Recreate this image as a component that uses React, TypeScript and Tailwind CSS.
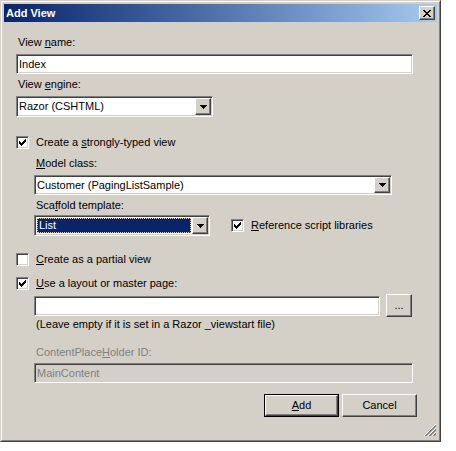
import type { ReactNode } from "react";

// classic 3D edges
const sunken =
  "border border-t-[#808080] border-l-[#808080] border-r-white border-b-white shadow-[inset_1px_1px_0_#404040,inset_-1px_-1px_0_#d4d0c8]";
const raised =
  "border border-t-white border-l-white border-r-[#404040] border-b-[#404040] shadow-[inset_-1px_-1px_0_#808080]";

const Arrow = () => (
  <svg width="7" height="4" viewBox="0 0 7 4" shapeRendering="crispEdges">
    <path d="M0 0h7v1H0zM1 1h5v1H1zM2 2h3v1H2zM3 3h1v1H3z" fill="#000" />
  </svg>
);

const Check = () => (
  <svg width="7" height="7" viewBox="0 0 7 7" shapeRendering="crispEdges" className="m-[1px]">
    <path
      d="M0 2h1v3H0zM1 3h1v3H1zM2 4h1v3H2zM3 3h1v3H3zM4 2h1v3H4zM5 1h1v3H5zM6 0h1v3H6z"
      fill="#000"
    />
  </svg>
);

const CheckBox = ({ checked, children }: { checked?: boolean; children: ReactNode }) => (
  <div className="flex items-center h-[13px]">
    <span className={`${sunken} bg-white w-[13px] h-[13px] p-[1px] flex shrink-0`}>
      {checked && <Check />}
    </span>
    <span className="ml-[7px] leading-[13px]">{children}</span>
  </div>
);

const Combo = ({
  className,
  selected,
  children,
}: {
  className: string;
  selected?: boolean;
  children: ReactNode;
}) => (
  <div className={`${sunken} bg-white flex p-[1px] ${className}`}>
    {selected ? (
      <div className="flex-1 m-[1px] bg-[#0a246a] text-white border border-dotted border-[#e8d48c] flex items-center pl-[1px]">
        {children}
      </div>
    ) : (
      <div className="flex-1 flex items-center pl-[1px]">{children}</div>
    )}
    <div className={`${raised} bg-[#d4d0c8] w-[16px] flex items-center justify-center`}>
      <Arrow />
    </div>
  </div>
);

const Grip = () => (
  <svg width="13" height="13" viewBox="0 0 13 13" shapeRendering="crispEdges" className="absolute right-[4px] bottom-[5px]">
    {[1, 5, 9].map((a) => (
      <g key={a}>
        <line x1={a} y1={13} x2={13} y2={a} stroke="#fff" />
        <line x1={a + 1} y1={13} x2={13} y2={a + 1} stroke="#808080" />
        <line x1={a + 2} y1={13} x2={13} y2={a + 2} stroke="#808080" />
      </g>
    ))}
  </svg>
);

export default function App() {
  return (
    <div className="w-[456px] h-[451px] bg-white font-['Liberation_Sans',Arial,sans-serif] text-[11px] text-black">
      <div className="relative w-[441px] h-[442px] border border-t-[#d4d0c8] border-l-[#d4d0c8] border-r-[#404040] border-b-[#404040] bg-[#d4d0c8]">
        <div className="h-full border border-t-white border-l-white border-r-[#808080] border-b-[#808080] p-[2px] flex flex-col">
          {/* caption */}
          <div className="h-[18px] shrink-0 flex items-center bg-linear-to-r from-[#0a246a] to-[#a6caf0] pl-[2px]">
            <span className="flex-1 text-white font-bold">Add View</span>
            <div className={`${raised} bg-[#d4d0c8] w-[16px] h-[14px] mr-[2px] flex items-center justify-center`}>
              <svg width="8" height="7" viewBox="0 0 8 7" shapeRendering="crispEdges">
                <path
                  d="M0 0h2v1H0zM6 0h2v1H6zM1 1h2v1H1zM5 1h2v1H5zM2 2h4v1H2zM3 3h2v1H3zM2 4h4v1H2zM1 5h2v1H1zM5 5h2v1H5zM0 6h2v1H0zM6 6h2v1H6z"
                  fill="#000"
                />
              </svg>
            </div>
          </div>

          <div className="flex flex-col pl-[12px] leading-[13px]">
            <div className="mt-[14px] h-[13px] ml-[2px]">
              View <u>n</u>ame:
            </div>
            <div className={`${sunken} mt-[5px] w-[397px] h-[20px] bg-white flex items-center pl-[2px]`}>
              Index
            </div>
            <div className="mt-[4px] h-[13px] ml-[2px]">
              View <u>e</u>ngine:
            </div>
            <Combo className="mt-[5px] w-[197px] h-[21px]">Razor (CSHTML)</Combo>

            <div className="mt-[19px]">
              <CheckBox checked>
                Create a <u>s</u>trongly-typed view
              </CheckBox>
            </div>
            <div className="mt-[8px] h-[13px] ml-[20px]">
              <u>M</u>odel class:
            </div>
            <Combo className="mt-[5px] ml-[18px] w-[358px] h-[20px]">Customer (PagingListSample)</Combo>
            <div className="mt-[4px] h-[13px] ml-[20px]">
              Sca<u>f</u>fold template:
            </div>
            <div className="mt-[3px] ml-[18px] h-[21px] flex items-center">
              <Combo className="w-[176px] h-[21px]" selected>
                List
              </Combo>
              <div className="ml-[21px]">
                <CheckBox checked>
                  <u>R</u>eference script libraries
                </CheckBox>
              </div>
            </div>

            <div className="mt-[17px]">
              <CheckBox>
                <u>C</u>reate as a partial view
              </CheckBox>
            </div>
            <div className="mt-[11px]">
              <CheckBox checked>
                <u>U</u>se a layout or master page:
              </CheckBox>
            </div>
            <div className="mt-[4px] ml-[18px] h-[23px] flex items-center">
              <div className={`${sunken} w-[346px] h-[20px] bg-white`} />
              <div className={`${raised} ml-[6px] w-[26px] h-[23px] flex items-center justify-center`}>
                ...
              </div>
            </div>
            <div className="mt-[1px] h-[13px] ml-[20px]">
              (Leave empty if it is set in a Razor _viewstart file)
            </div>
            <div className="mt-[15px] h-[13px] ml-[20px] text-[#808080]">
              ContentPlace<u>H</u>older ID:
            </div>
            <div className={`${sunken} mt-[4px] ml-[18px] w-[379px] h-[20px] flex items-center pl-[2px] text-[#808080]`}>
              MainContent
            </div>

            <div className="mt-[11px] ml-[248px] flex">
              <div className="border border-black w-[75px] h-[23px] flex">
                <div className={`${raised} flex-1 flex items-center justify-center`}>
                  <span>
                    <u>A</u>dd
                  </span>
                </div>
              </div>
              <div className={`${raised} ml-[3px] w-[75px] h-[23px] flex items-center justify-center`}>
                Cancel
              </div>
            </div>
          </div>
        </div>
        <Grip />
      </div>
    </div>
  );
}
